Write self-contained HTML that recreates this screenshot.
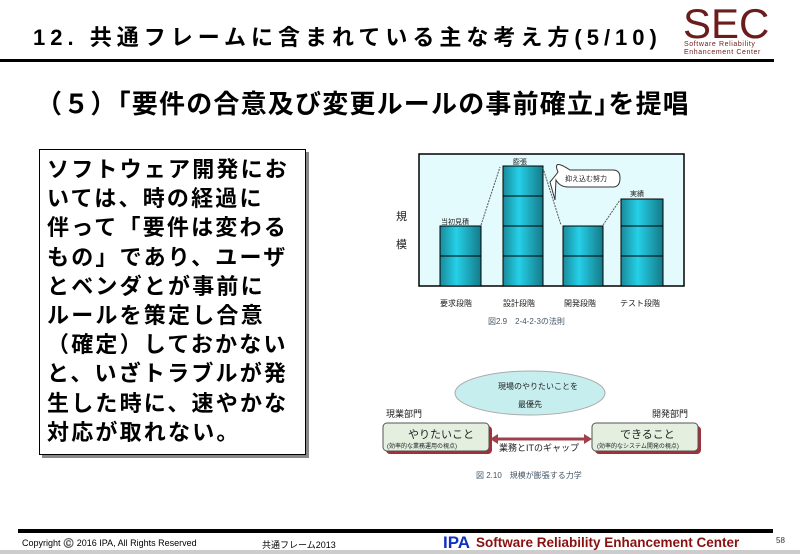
<!DOCTYPE html>
<html><head><meta charset="utf-8"><style>
*{margin:0;padding:0}
body{width:800px;height:554px;background:#fff;position:relative;overflow:hidden;font-family:"Liberation Sans","Noto Sans CJK JP",sans-serif}
.a{position:absolute;white-space:nowrap}
</style></head><body>
<div class="a" style="left:33px;top:20px;font-size:22px;font-weight:bold;letter-spacing:5px">12. 共通フレームに含まれている主な考え方(5/10)</div>
<div class="a" style="left:683px;top:0px;font-size:42px;color:#6b1c1c;letter-spacing:0px">SEC</div>
<div class="a" style="left:684px;top:41px;font-size:7px;color:#6b1c1c;line-height:8px;letter-spacing:0.6px">Software Reliability<br>Enhancement Center</div>
<div class="a" style="left:0;top:59px;width:774px;height:3px;background:#000"></div>
<div class="a" style="left:36px;top:84px;font-size:26px;font-weight:bold;letter-spacing:1.2px">（５）｢要件の合意及び変更ルールの事前確立｣を提唱</div>
<div class="a" style="left:39px;top:149px;width:265px;height:304px;border:1px solid #000;box-shadow:3px 3px 0 #888"></div>
<div class="a" style="left:47px;top:155px;font-size:22px;font-weight:bold;line-height:29.2px;letter-spacing:2.2px">ソフトウェア開発にお<br>いては、時の経過に<br>伴って「要件は変わる<br>もの」であり、ユーザ<br>とベンダとが事前に<br>ルールを策定し合意<br>（確定）しておかない<br>と、いざトラブルが発<br>生した時に、速やかな<br>対応が取れない。</div>
<svg class="a" style="left:0;top:0" width="800" height="554">
<defs><linearGradient id="g" x1="0" x2="1"><stop offset="0" stop-color="#1a8a9a"/><stop offset=".4" stop-color="#25d0e8"/><stop offset="1" stop-color="#157a88"/></linearGradient></defs>
<rect x="419" y="154" width="265" height="132" fill="#e3fbfd" stroke="#000" stroke-width="1.5"/>
<g stroke="#000" stroke-width="1" fill="url(#g)">
<rect x="440" y="226" width="41" height="60"/><line x1="440" y1="256" x2="481" y2="256"/>
<rect x="503" y="166" width="40" height="120"/><line x1="503" y1="196" x2="543" y2="196"/><line x1="503" y1="226" x2="543" y2="226"/><line x1="503" y1="256" x2="543" y2="256"/>
<rect x="563" y="226" width="40" height="60"/><line x1="563" y1="256" x2="603" y2="256"/>
<rect x="621" y="199" width="42" height="87"/><line x1="621" y1="226" x2="663" y2="226"/><line x1="621" y1="256" x2="663" y2="256"/>
</g>
<g stroke="#555" stroke-width="1" stroke-dasharray="2,1" fill="none"><line x1="481" y1="225" x2="500" y2="167"/><line x1="543" y1="168" x2="561" y2="225"/><line x1="603" y1="225" x2="620" y2="200"/></g>
<path d="M558 172 Q552 158 570 170 L613 170 Q620 170 620 178 Q620 187 613 187 L568 187 Q560 187 556 180 L555 200 L550 182 Q556 175 558 172Z" fill="#fff" stroke="#333"/>
<ellipse cx="530" cy="393" rx="75" ry="22" fill="#c6eeee" stroke="#aaa"/>
<rect x="386" y="426" width="106" height="28" rx="4" fill="#a0303a"/>
<rect x="383" y="423" width="106" height="28" rx="4" fill="#e4efe0" stroke="#555"/>
<rect x="595" y="426" width="106" height="28" rx="4" fill="#a0303a"/>
<rect x="592" y="423" width="106" height="28" rx="4" fill="#e4efe0" stroke="#555"/>
<line x1="495" y1="439" x2="588" y2="439" stroke="#a0404a" stroke-width="3"/>
<path d="M490 439 L498 434 L498 444Z M592 439 L584 434 L584 444Z" fill="#a0404a"/>
</svg>
<div style="position:absolute;font-size:9px;color:#222">
<div class="a" style="left:396px;top:203px;font-size:11px;line-height:28px">規<br>模</div>
<div class="a" style="left:441px;top:217px;font-size:7px">当初見積</div>
<div class="a" style="left:513px;top:157px;font-size:7px">膨張</div>
<div class="a" style="left:565px;top:174px;font-size:7px">抑え込む努力</div>
<div class="a" style="left:630px;top:189px;font-size:7px">実績</div>
<div class="a" style="left:440px;top:298px;font-size:8px">要求段階</div>
<div class="a" style="left:503px;top:298px;font-size:8px">設計段階</div>
<div class="a" style="left:564px;top:298px;font-size:8px">開発段階</div>
<div class="a" style="left:620px;top:298px;font-size:8px">テスト段階</div>
<div class="a" style="left:488px;top:316px;font-size:8px;color:#456">図2.9　2-4-2-3の法則</div>
<div class="a" style="left:498px;top:381px;font-size:8px">現場のやりたいことを</div>
<div class="a" style="left:518px;top:399px;font-size:8px">最優先</div>
<div class="a" style="left:386px;top:407px;font-size:9px">現業部門</div>
<div class="a" style="left:652px;top:407px;font-size:9px">開発部門</div>
<div class="a" style="left:408px;top:426px;font-size:11px">やりたいこと</div>
<div class="a" style="left:387px;top:441px;font-size:6px">(効率的な業務運用の視点)</div>
<div class="a" style="left:620px;top:426px;font-size:11px">できること</div>
<div class="a" style="left:597px;top:441px;font-size:6px">(効率的なシステム開発の視点)</div>
<div class="a" style="left:499px;top:441px;font-size:9px">業務とITのギャップ</div>
<div class="a" style="left:476px;top:470px;font-size:8px;color:#456">図 2.10　規模が膨張する力学</div>
</div>
<div class="a" style="left:18px;top:529px;width:755px;height:4px;background:#000"></div>
<div class="a" style="left:22px;top:538px;font-size:9px">Copyright ©️ 2016 IPA, All Rights Reserved</div>
<div class="a" style="left:262px;top:538px;font-size:9px">共通フレーム2013</div>
<div class="a" style="left:443px;top:533px;font-size:17px;font-weight:bold;color:#1030c0">IPA</div>
<div class="a" style="left:476px;top:535px;font-size:13.5px;font-weight:bold;color:#8a1010">Software Reliability Enhancement Center</div>
<div class="a" style="left:776px;top:536px;font-size:8px;color:#333">58</div>
<div class="a" style="left:0;top:550px;width:800px;height:4px;background:#ccc"></div>
</body></html>
